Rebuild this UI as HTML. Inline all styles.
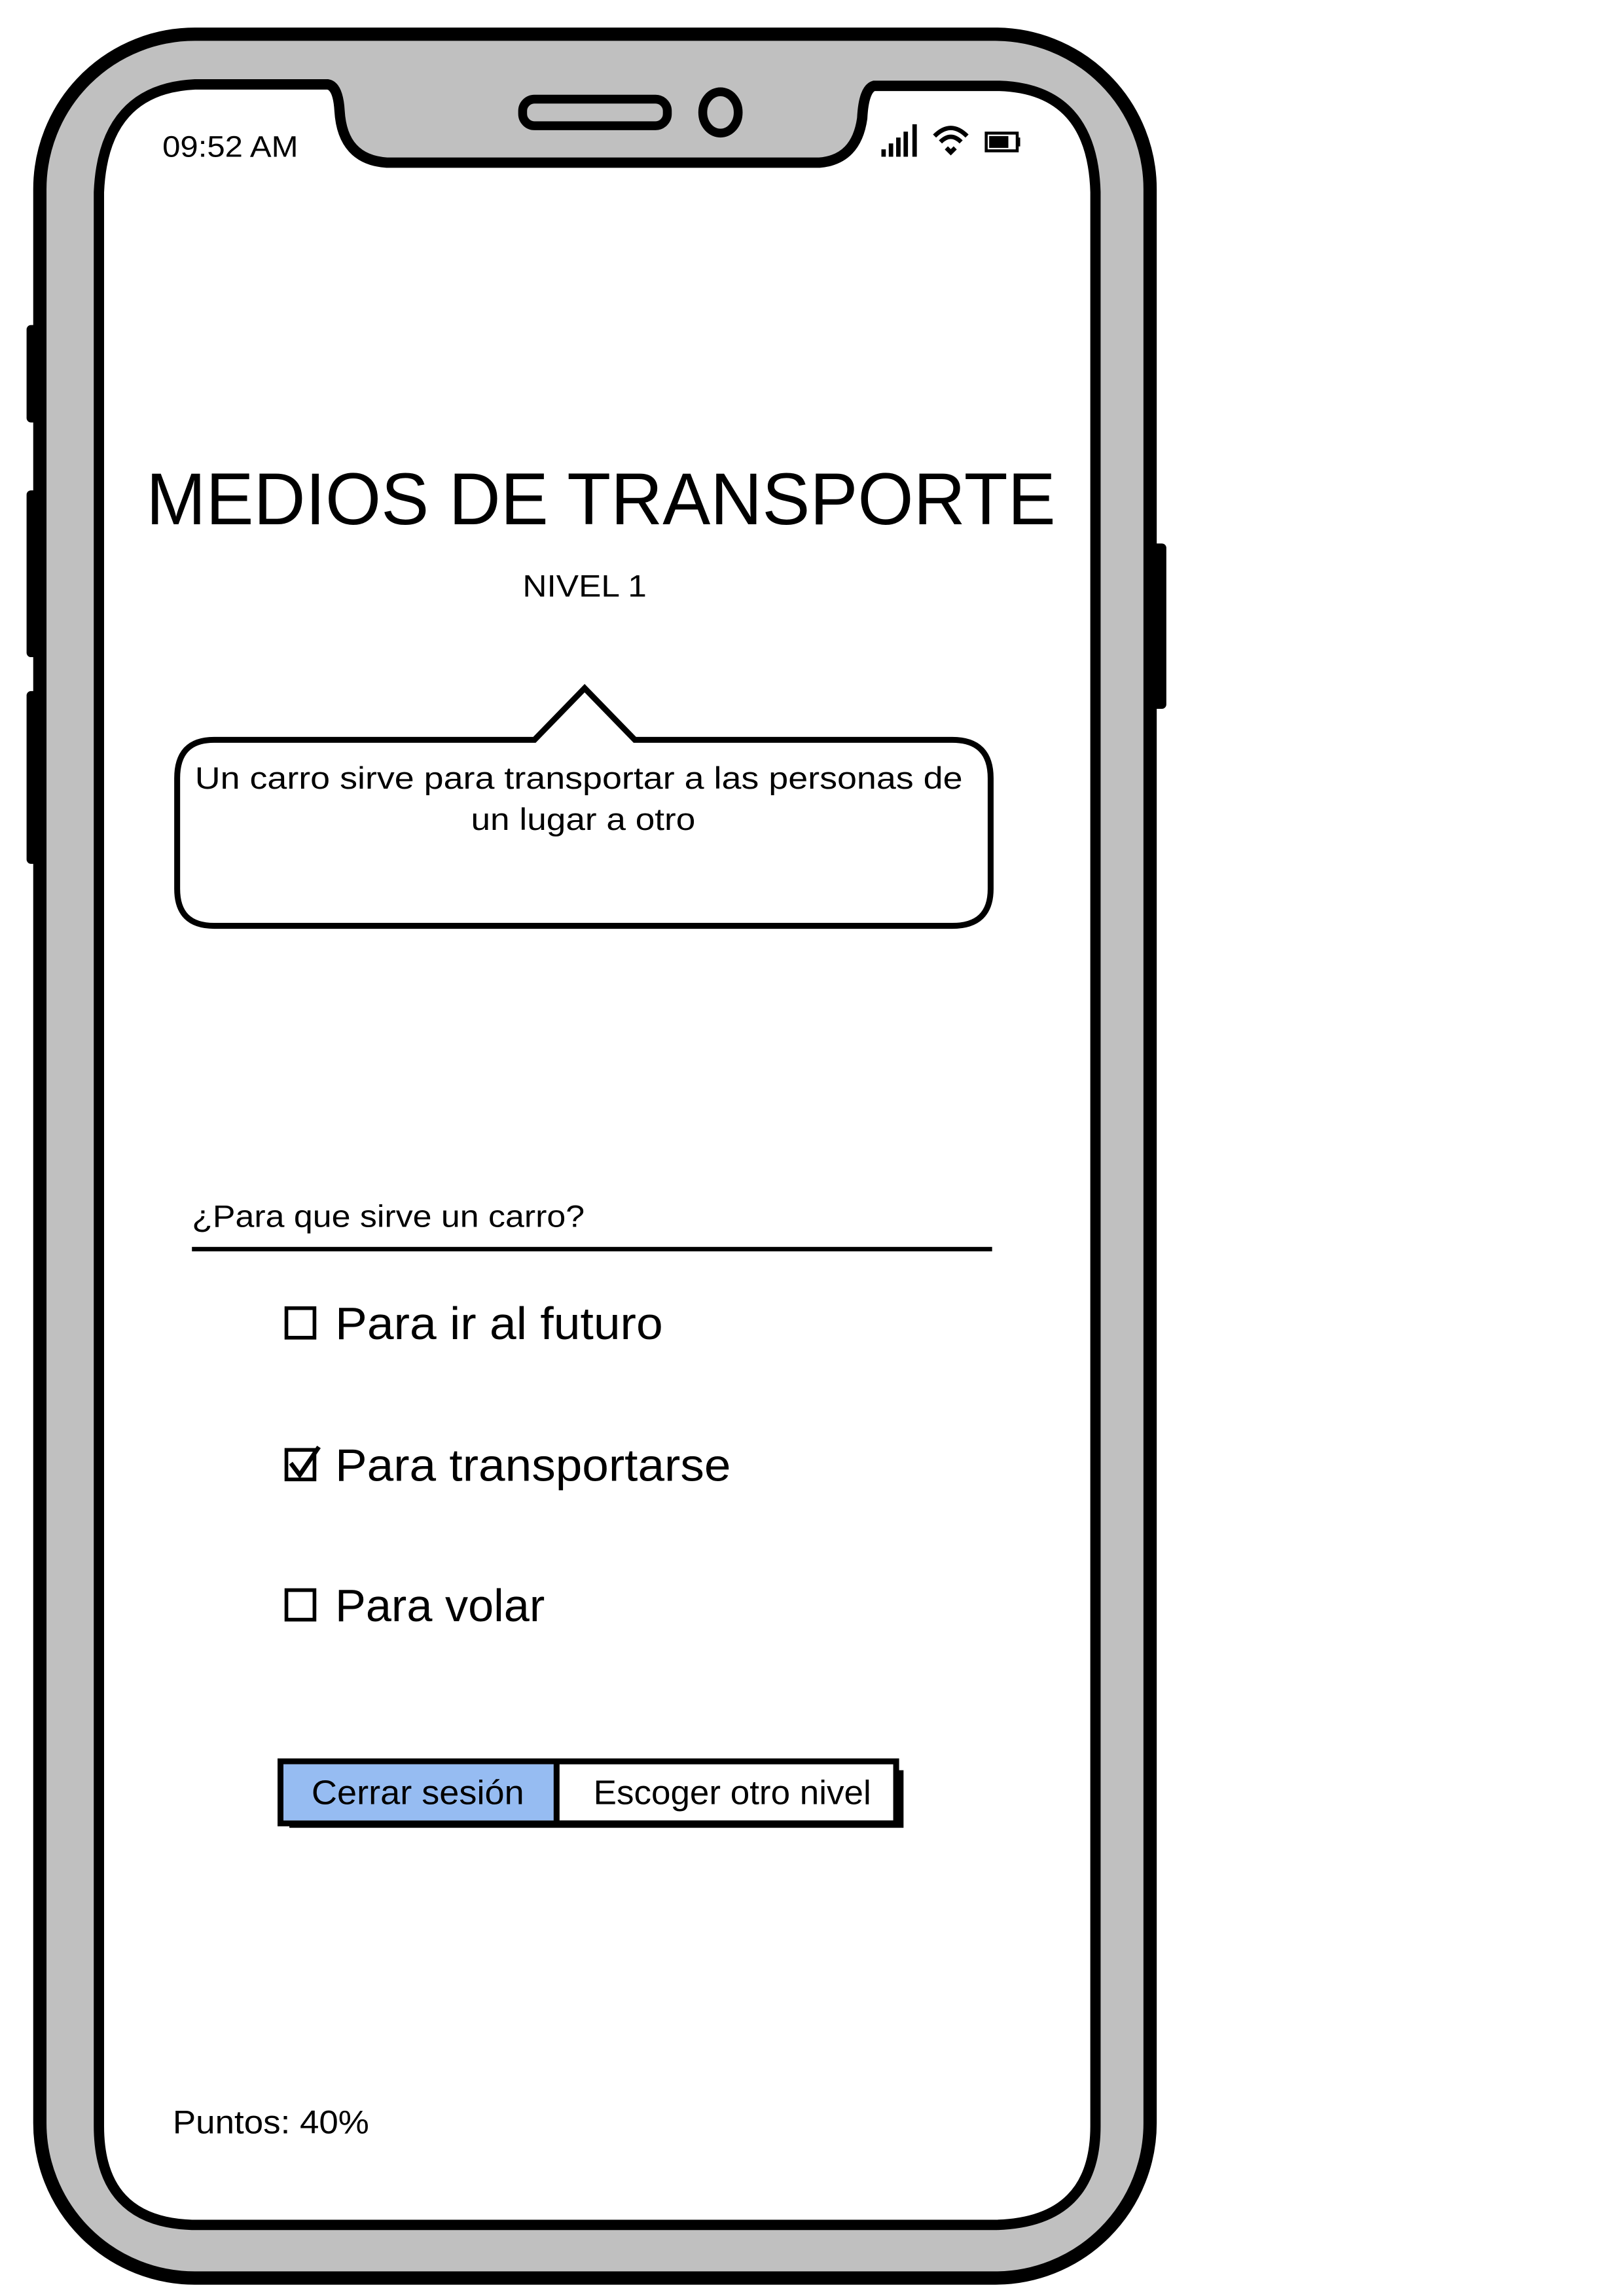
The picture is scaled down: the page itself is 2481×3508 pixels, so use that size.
<!DOCTYPE html>
<html><head><meta charset="utf-8">
<style>
html,body{margin:0;padding:0;background:#fff;}
svg{display:block;}
text{font-family:"Liberation Sans",sans-serif;fill:#000;}
</style></head>
<body>
<svg width="2481" height="3508" viewBox="0 0 1100 1555" xmlns="http://www.w3.org/2000/svg">
<rect x="18" y="220" width="10" height="66" rx="3" fill="#000"/>
<rect x="18" y="332" width="10" height="113" rx="3" fill="#000"/>
<rect x="18" y="468" width="10" height="117" rx="3" fill="#000"/>
<rect x="778" y="368" width="12" height="112" rx="3" fill="#000"/>
<rect x="27" y="23" width="752" height="1520" rx="105" fill="#c0c0c0" stroke="#000" stroke-width="9"/>
<path d="M132 57 L222 57 Q229 58 230 75 Q232 108 262 110 L555 110 Q580 108 584 80 Q585 60 592 58 L677 58 Q740 60 742 130 L742 1440 Q742 1505 675 1507 L130 1507 Q67 1505 67 1440 L67 130 Q70 60 132 57 Z" fill="#fff" stroke="#000" stroke-width="7"/>
<rect x="354" y="67" width="98" height="18" rx="8" fill="#c0c0c0" stroke="#000" stroke-width="6"/>
<ellipse cx="488" cy="76" rx="12" ry="14" fill="#c0c0c0" stroke="#000" stroke-width="6"/>
<text x="110" y="106" font-size="20" textLength="92" lengthAdjust="spacingAndGlyphs">09:52 AM</text>
<rect x="597" y="101" width="3" height="5" fill="#000"/>
<rect x="602" y="97" width="3" height="9" fill="#000"/>
<rect x="607" y="93" width="3" height="13" fill="#000"/>
<rect x="612" y="89" width="3" height="17" fill="#000"/>
<rect x="618" y="84" width="3" height="22" fill="#000"/>
<path d="M633 92 Q644 81 655 92 M637 96 Q644 89 651 96 M641 100 L644 103 L647 100" fill="none" stroke="#000" stroke-width="3"/>
<rect x="668" y="90" width="21" height="12" fill="none" stroke="#000" stroke-width="2"/>
<rect x="670" y="92" width="13" height="8" fill="#000"/>
<rect x="689" y="93" width="2" height="6" fill="#000"/>
<text x="407" y="355" font-size="50" text-anchor="middle" textLength="616" lengthAdjust="spacingAndGlyphs">MEDIOS DE TRANSPORTE</text>
<text x="396" y="404" font-size="21" text-anchor="middle" textLength="84" lengthAdjust="spacingAndGlyphs">NIVEL 1</text>
<path d="M145 501 L362 501 L396 466 L430 501 L645 501 Q671 501 671 527 L671 602 Q671 627 645 627 L145 627 Q120 627 120 602 L120 527 Q120 501 145 501 Z" fill="#fff" stroke="#000" stroke-width="4"/>
<text x="392" y="534" font-size="21" text-anchor="middle" textLength="520" lengthAdjust="spacingAndGlyphs">Un carro sirve para transportar a las personas de</text>
<text x="395" y="562" font-size="21" text-anchor="middle" textLength="152" lengthAdjust="spacingAndGlyphs">un lugar a otro</text>
<text x="130" y="831" font-size="21" textLength="266" lengthAdjust="spacingAndGlyphs">¿Para que sirve un carro?</text>
<line x1="130" y1="846" x2="672" y2="846" stroke="#000" stroke-width="3"/>
<rect x="194" y="886" width="19" height="20" fill="none" stroke="#000" stroke-width="2.5"/>
<text x="227" y="907" font-size="31" textLength="222" lengthAdjust="spacingAndGlyphs">Para ir al futuro</text>
<rect x="194" y="982" width="19" height="20" fill="none" stroke="#000" stroke-width="2.5"/>
<path d="M197 991 L203 999 L216 980" fill="none" stroke="#000" stroke-width="3"/>
<text x="227" y="1003" font-size="31" textLength="268" lengthAdjust="spacingAndGlyphs">Para transportarse</text>
<rect x="194" y="1077" width="19" height="20" fill="none" stroke="#000" stroke-width="2.5"/>
<text x="227" y="1098" font-size="31" textLength="142" lengthAdjust="spacingAndGlyphs">Para volar</text>
<rect x="196" y="1199" width="416" height="39" fill="#000"/>
<rect x="190" y="1193" width="417" height="42" fill="#fff" stroke="#000" stroke-width="4"/>
<rect x="192" y="1195" width="185" height="38" fill="#96bcf2"/>
<line x1="377" y1="1193" x2="377" y2="1235" stroke="#000" stroke-width="4"/>
<text x="283" y="1222" font-size="23" text-anchor="middle" textLength="144" lengthAdjust="spacingAndGlyphs">Cerrar sesión</text>
<text x="496" y="1222" font-size="23" text-anchor="middle" textLength="188" lengthAdjust="spacingAndGlyphs">Escoger otro nivel</text>
<text x="117" y="1445" font-size="22" textLength="133" lengthAdjust="spacingAndGlyphs">Puntos: 40%</text>
</svg>
</body></html>
